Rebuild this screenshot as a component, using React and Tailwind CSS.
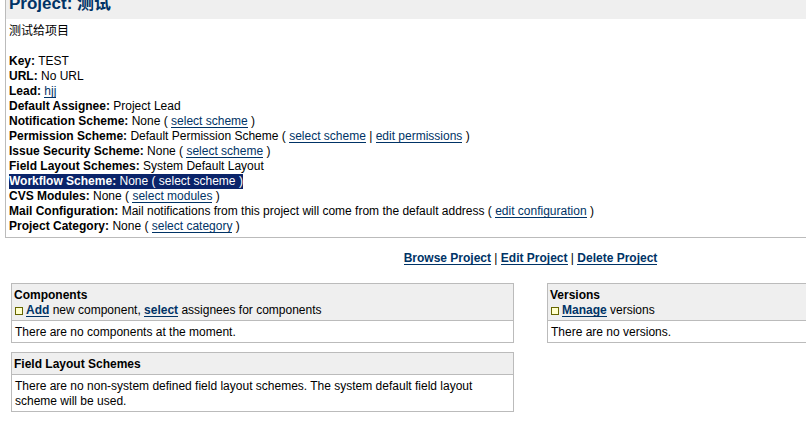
const details = [
    { label: 'Key', value: 'TEST' },
    { label: 'URL', value: 'No URL' },
    { label: 'Lead', links: ['hjj'], plain: true },
    { label: 'Default Assignee', value: 'Project Lead' },
    { label: 'Notification Scheme', value: 'None', links: ['select scheme'] },
    { label: 'Permission Scheme', value: 'Default Permission Scheme', links: ['select scheme', 'edit permissions'] },
    { label: 'Issue Security Scheme', value: 'None', links: ['select scheme'] },
    { label: 'Field Layout Schemes', value: 'System Default Layout' },
    { label: 'Workflow Scheme', value: 'None', links: ['select scheme'], selected: true },
    { label: 'CVS Modules', value: 'None', links: ['select modules'] },
    { label: 'Mail Configuration', value: 'Mail notifications from this project will come from the default address', links: ['edit configuration'] },
    { label: 'Project Category', value: 'None', links: ['select category'] },
];

const Link = ({ children, className = 'text-[#003366] border-[#003366]' }) => (
    <a href="#" className={`inline-block h-[14px] border-b leading-[15px] ${className}`}>{children}</a>
);

const BoldLink = ({ children }) => (
    <b><Link>{children}</Link></b>
);

const Bullet = () => (
    <span className="ml-px mr-[3px] inline-block h-2 w-2 border border-[#666600] bg-[#ffffcc] align-[-1px]"></span>
);

const DetailRow = ({ label, value, links = [], plain, selected }) => {
    const linkStyle = selected ? 'text-white border-transparent' : undefined;

    return (
        <div className="h-[15px]">
            <span className={selected ? 'inline-block bg-[#0a246a] text-white' : 'inline-block'}>
                <b>{label}:</b> {value}
                {links.length > 0 && !plain && ' ( '}
                {links.map((link, i) => (
                    <span key={link}>
                        {i > 0 && ' | '}
                        <Link className={linkStyle}>{link}</Link>
                    </span>
                ))}
                {links.length > 0 && !plain && ' )'}
            </span>
        </div>
    );
};

const Panel = ({ title, actions, children }) => (
    <section className="border border-[#bbbbbb]">
        <div className="border-b border-[#bbbbbb] bg-[#efefef] px-[2px] pt-1 pb-[2px]">
            <h2 className="font-bold">{title}</h2>
            {actions && <p className="h-[15px]">{actions}</p>}
        </div>
        <div className="px-[3px] pt-1 pb-[2px]">{children}</div>
    </section>
);

export default function App() {
    return (
        <div className="min-h-screen overflow-hidden bg-white font-['Liberation_Sans','Noto_Sans_CJK_SC',sans-serif] text-[12px] leading-[15px] text-black">
            <main className="min-w-[1061px] px-[5px]">
                <section className="border border-t-0 border-[#bbbbbb]">
                    <header className="flex h-[19px] items-end bg-[#efefef] px-[3px] pb-[5px]">
                        <h1 className="text-[17px] font-bold leading-[20px] text-[#003366]">Project: 测试</h1>
                    </header>
                    <div className="px-[3px] pt-[5px] pb-[3px]">
                        <p className="mb-[15px] h-[15px]">测试给项目</p>
                        {details.map((row) => (
                            <DetailRow key={row.label} {...row} />
                        ))}
                    </div>
                </section>

                <nav className="pt-[13px] pb-[11px] text-center">
                    <BoldLink>Browse Project</BoldLink> | <BoldLink>Edit Project</BoldLink> | <BoldLink>Delete Project</BoldLink>
                </nav>

                <div className="grid grid-cols-2 items-start gap-[33px] px-[6px] pt-[6px]">
                    <div className="flex flex-col gap-[9px]">
                        <Panel
                            title="Components"
                            actions={<><Bullet /><BoldLink>Add</BoldLink> new component, <BoldLink>select</BoldLink> assignees for components</>}
                        >
                            There are no components at the moment.
                        </Panel>
                        <Panel title="Field Layout Schemes">
                            There are no non-system defined field layout schemes. The system default field layout scheme will be used.
                        </Panel>
                    </div>
                    <Panel title="Versions" actions={<><Bullet /><BoldLink>Manage</BoldLink> versions</>}>
                        There are no versions.
                    </Panel>
                </div>
            </main>
        </div>
    );
}
